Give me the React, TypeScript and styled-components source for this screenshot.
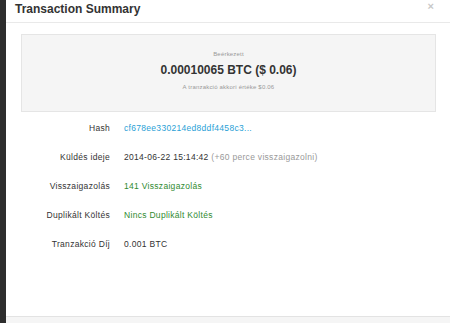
import styled, { createGlobalStyle } from 'styled-components';

const GlobalStyle = createGlobalStyle`
  html, body {
    margin: 0;
    padding: 0;
    background: #2b2b2b;
  }
  body {
    font-family: "Liberation Sans", Arial, sans-serif;
    color: #333;
  }
`;

const Screen = styled.div`
  width: 450px;
  height: 323px;
  display: flex;
  overflow: hidden;
  background: #2b2b2b;
`;

const Backdrop = styled.div`
  width: 6px;
  flex-shrink: 0;
  background: #2d2d2d;
`;

const Modal = styled.div`
  flex: 1;
  display: flex;
  flex-direction: column;
  background: #fff;
  position: relative;
`;

const Header = styled.div`
  height: 23px;
  display: flex;
  align-items: center;
  padding: 0 9px 4px;
  border-bottom: 1px solid #e9e9e9;
  box-sizing: border-box;
`;

const Title = styled.h3`
  margin: 0;
  font-size: 12px;
  font-weight: bold;
  color: #333;
`;

const CloseBtn = styled.span`
  position: absolute;
  right: 16px;
  top: 0;
  font-size: 11px;
  color: #c8c8c8;
  font-weight: bold;
  cursor: pointer;
`;

const Body = styled.div`
  flex: 1;
  padding: 11px 14px 0 15px;
`;

const Summary = styled.div`
  height: 78px;
  box-sizing: border-box;
  background: #f5f5f5;
  border: 1px solid #e5e5e5;
  display: flex;
  flex-direction: column;
  align-items: center;
  padding-top: 16px;
`;

const SmallNote = styled.div`
  font-size: 6px;
  color: #999;
  letter-spacing: 0.2px;
`;

const Amount = styled.div`
  font-size: 12px;
  font-weight: bold;
  color: #333;
  margin: 6px 0 7px;
`;

const Rows = styled.div`
  display: flex;
  flex-direction: column;
  margin-top: 1px;
`;

const Row = styled.div`
  display: grid;
  grid-template-columns: 89px 1fr;
  column-gap: 14px;
  height: 29px;
  align-items: center;
  font-size: 8.5px;
  letter-spacing: 0.3px;
`;

const Label = styled.div`
  text-align: right;
  color: #333;
`;

const Value = styled.div<{ tone?: 'link' | 'ok' | 'plain' }>`
  color: ${(p) =>
    p.tone === 'link' ? '#2a9fd6' : p.tone === 'ok' ? '#2f8a2f' : '#333'};
`;

const Muted = styled.span`
  color: #999;
`;

const Footer = styled.div`
  height: 6px;
  border-top: 1px solid #e3e3e3;
  background: #f5f5f5;
`;

export default function App() {
  return (
    <>
      <GlobalStyle />
      <Screen>
        <Backdrop />
        <Modal>
          <Header>
            <Title>Transaction Summary</Title>
          </Header>
          <CloseBtn>×</CloseBtn>
          <Body>
            <Summary>
              <SmallNote>Beérkezett</SmallNote>
              <Amount>0.00010065 BTC ($ 0.06)</Amount>
              <SmallNote>A tranzakció akkori értéke $0.06</SmallNote>
            </Summary>
            <Rows>
              <Row>
                <Label>Hash</Label>
                <Value tone="link">cf678ee330214ed8ddf4458c3...</Value>
              </Row>
              <Row>
                <Label>Küldés ideje</Label>
                <Value>
                  2014-06-22 15:14:42 <Muted>(+60 perce visszaigazolni)</Muted>
                </Value>
              </Row>
              <Row>
                <Label>Visszaigazolás</Label>
                <Value tone="ok">141 Visszaigazolás</Value>
              </Row>
              <Row>
                <Label>Duplikált Költés</Label>
                <Value tone="ok">Nincs Duplikált Költés</Value>
              </Row>
              <Row>
                <Label>Tranzakció Díj</Label>
                <Value>0.001 BTC</Value>
              </Row>
            </Rows>
          </Body>
          <Footer />
        </Modal>
      </Screen>
    </>
  );
}
